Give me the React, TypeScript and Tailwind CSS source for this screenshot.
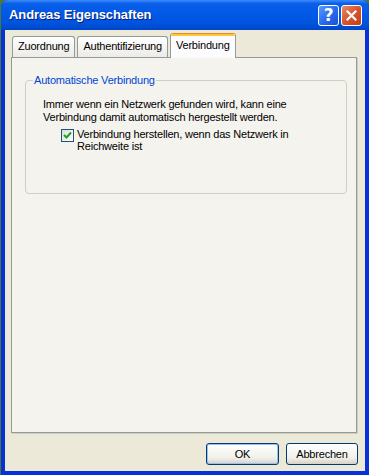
import React from "react";

const font = { fontFamily: '"Liberation Sans", Arial, sans-serif', letterSpacing: "-0.2px" };

function HelpBtn() {
  return (
    <div className="w-[21px] h-[21px] rounded-[3px] border border-white bg-[linear-gradient(135deg,#5b9cff_0%,#2a6cf0_50%,#1b4fd6_100%)] flex items-center justify-center">
      <span className="text-white font-bold text-[17px] leading-none" style={{ fontFamily: '"DejaVu Sans", sans-serif' }}>?</span>
    </div>
  );
}

function CloseBtn() {
  return (
    <div className="w-[21px] h-[21px] rounded-[3px] border border-white bg-[linear-gradient(135deg,#e88a6a_0%,#d9542c_50%,#c33d1a_100%)] flex items-center justify-center">
      <svg width="11" height="11" viewBox="0 0 11 11">
        <path d="M1.5 1.5 L9.5 9.5 M9.5 1.5 L1.5 9.5" stroke="white" strokeWidth="2.2" strokeLinecap="square" />
      </svg>
    </div>
  );
}

function Tab({ label, selected }: { label: string; selected?: boolean }) {
  if (selected) {
    return (
      <div className="relative -mb-[1px] z-10 h-[25px] flex flex-col border-x border-[#919b9c] bg-[#fcfcfe] rounded-t-[3px] overflow-hidden">
        <div className="h-[1px] bg-[#e68b2c]" />
        <div className="h-[2px] bg-[#ffc83c]" />
        <div className="flex-1 px-[5px] text-[11px] text-black leading-none pt-[4px]">{label}</div>
      </div>
    );
  }
  return (
    <div className="h-[21px] border-x border-t border-[#919b9c] rounded-t-[3px] bg-[linear-gradient(#ffffff,#ecebe6)] px-[5px] text-[11px] text-black leading-none pt-[4px]">
      {label}
    </div>
  );
}

export default function App() {
  return (
    <div className="w-[369px] h-[475px] bg-[#4a7a3a] overflow-hidden" style={font}>
      <div className="ml-[1px] w-[368px] h-[475px] flex flex-col rounded-t-[7px] bg-[#0831d9] overflow-hidden">
        <div className="h-[30px] shrink-0 flex items-center pl-[8px] pr-[7px] bg-[linear-gradient(#3b8cff_0%,#0a5fe8_12%,#0058e6_50%,#0053dc_80%,#0045c8_100%)]">
          <span className="text-white font-bold text-[13px] flex-1" style={{ textShadow: "1px 1px #0a1e7a", letterSpacing: "-0.1px" }}>
            Andreas Eigenschaften
          </span>
          <div className="flex gap-[2px]">
            <HelpBtn />
            <CloseBtn />
          </div>
        </div>
        <div className="flex-1 mx-[4px] mb-[4px] bg-[#ece9d8] flex flex-col pt-[3px] pl-[6px] pr-[8px]">
          <div className="flex items-end gap-[2px] pl-[1px]">
            <Tab label="Zuordnung" />
            <Tab label="Authentifizierung" />
            <Tab label="Verbindung" selected />
          </div>
          <div className="h-[376px] border border-[#919b9c] bg-[#f4f3ee] shadow-[1px_1px_0_#d0cebf] pt-[22px] pl-[13px] pr-[9px]">
            <div className="relative h-[114px] border border-[#d0d0bf] rounded-[4px] pt-[17px] pl-[17px]">
              <div className="absolute -top-[8px] left-[7px] px-[1px] bg-[#f4f3ee] text-[11px] text-[#0046d5] leading-[14px]">
                Automatische Verbindung
              </div>
              <div className="text-[11px] leading-[13px] text-black">
                Immer wenn ein Netzwerk gefunden wird, kann eine
                <br />
                Verbindung damit automatisch hergestellt werden.
              </div>
              <div className="flex mt-[4px] ml-[18px]">
                <div className="w-[13px] h-[13px] mt-[1px] border border-[#1c5180] bg-[linear-gradient(135deg,#dcdcd6,#ffffff)] flex items-center justify-center">
                  <svg width="9" height="9" viewBox="0 0 9 9">
                    <path d="M1 4 L3.5 6.5 L8 1.5" stroke="#21a121" strokeWidth="2" fill="none" />
                  </svg>
                </div>
                <div className="ml-[3px] text-[11px] leading-[12px] text-black">
                  Verbindung herstellen, wenn das Netzwerk in
                  <br />
                  Reichweite ist
                </div>
              </div>
            </div>
          </div>
          <div className="flex justify-end gap-[7px] mt-[10px] -mr-[1px]">
            <div className="w-[73px] h-[22px] rounded-[3px] border border-[#003c74] bg-[linear-gradient(#ffffff,#f0f0ea_70%,#d6d0c5)] shadow-[inset_0_0_0_1px_#9bbdf5] flex items-center justify-center text-[11px]">
              OK
            </div>
            <div className="w-[72px] h-[22px] rounded-[3px] border border-[#003c74] bg-[linear-gradient(#ffffff,#f0f0ea_70%,#d6d0c5)] flex items-center justify-center text-[11px]">
              Abbrechen
            </div>
          </div>
        </div>
      </div>
    </div>
  );
}
